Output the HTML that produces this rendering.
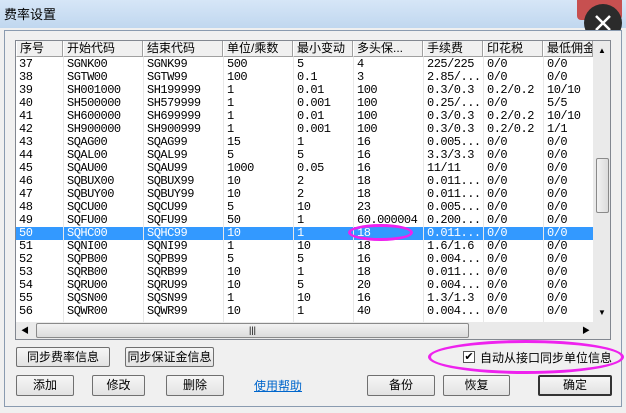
<!DOCTYPE html>
<html><head><meta charset="utf-8"><style>
*{margin:0;padding:0;box-sizing:border-box}
body{width:626px;height:413px;overflow:hidden;background:#f0f0f0;font-family:"Liberation Sans","Noto Sans CJK SC",sans-serif;font-size:12px;color:#000;position:relative}
.abs{position:absolute}
.title{left:0;top:0;width:626px;height:28px;background:linear-gradient(#d6e6f7,#c0d7ef);}
.title span{position:absolute;left:4px;top:4px;font-size:13px}
.panel{left:4px;top:30px;width:618px;height:377px;border:1px solid #8a9bb0;background:#f0f0f0}
.grid{left:15px;top:40px;width:596px;height:300px;border:1px solid #828790;background:#fff;overflow:hidden}
.hdr{position:absolute;top:0;height:16px;background:#f0f0f0;border-right:1px solid #a0a0a0;border-bottom:1px solid #a0a0a0;border-left:1px solid #fff;padding-left:3px;line-height:15px;white-space:nowrap;overflow:hidden}
.row{position:absolute;left:0;width:577px;height:13px;line-height:13px;font-family:"Liberation Mono","Noto Sans CJK SC",monospace;font-size:12px;letter-spacing:-0.5px}
.row span{position:absolute;top:0;white-space:nowrap}
.vl{position:absolute;top:16px;height:265px;width:1px;background:#e8e8e8}
.sel{background:#3399ff;color:#fff}
.btn{position:absolute;background:linear-gradient(#f6f6f6,#e2e2e2);border:1px solid #707070;border-radius:2px;text-align:center;font-size:12px;white-space:nowrap;overflow:hidden}
</style></head><body>
<div class="abs title"><span>费率设置</span></div>
<div class="abs" style="left:577px;top:0;width:45px;height:20px;background:#c75050;border-radius:0 0 4px 4px"></div>
<div class="abs" style="left:584px;top:4px;width:38px;height:38px;border-radius:50%;background:#2b2b2b"></div>
<svg class="abs" style="left:584px;top:4px" width="38" height="38"><path d="M12 12L26 26M26 12L12 26" stroke="#fff" stroke-width="2.5"/></svg>
<div class="abs panel"></div>
<div class="abs grid">
<div class="hdr" style="left:0;width:47px">序号</div>
<div class="hdr" style="left:47px;width:80px">开始代码</div>
<div class="hdr" style="left:127px;width:80px">结束代码</div>
<div class="hdr" style="left:207px;width:70px">单位/乘数</div>
<div class="hdr" style="left:277px;width:60px">最小变动</div>
<div class="hdr" style="left:337px;width:70px">多头保...</div>
<div class="hdr" style="left:407px;width:60px">手续费</div>
<div class="hdr" style="left:467px;width:60px">印花税</div>
<div class="hdr" style="left:527px;width:50px">最低佣金</div>
<div id="rows"></div>
<div class="vl" style="left:47px"></div><div class="vl" style="left:127px"></div><div class="vl" style="left:207px"></div><div class="vl" style="left:277px"></div><div class="vl" style="left:337px"></div><div class="vl" style="left:407px"></div><div class="vl" style="left:467px"></div><div class="vl" style="left:527px"></div>
<div class="abs" style="left:577px;top:0;width:17px;height:298px;background:#eaeaea"></div>
<div class="abs" style="left:582px;top:5px;font-size:8px">▲</div>
<div class="abs" style="left:582px;top:267px;font-size:8px">▼</div>
<div class="abs" style="left:580px;top:117px;width:13px;height:55px;border:1px solid #8a8a8a;border-radius:2px;background:linear-gradient(90deg,#f2f2f2,#dcdcdc)"></div>
<div class="abs" style="left:0;top:281px;width:577px;height:17px;background:#eaeaea"></div>
<div class="abs" style="left:5px;top:284px;font-size:8px">◀</div>
<div class="abs" style="left:566px;top:284px;font-size:8px">▶</div>
<div class="abs" style="left:20px;top:282px;width:433px;height:15px;border:1px solid #8a8a8a;border-radius:2px;background:linear-gradient(#f2f2f2,#dcdcdc);text-align:center;font-size:9px;line-height:13px">|||</div>
</div>
<div class="abs" style="left:348px;top:224px;width:65px;height:17px;border:3px solid #ee22ee;border-radius:50%"></div>
<div class="btn" style="left:16px;top:347px;width:94px;height:20px;line-height:18px">同步费率信息</div>
<div class="btn" style="left:125px;top:347px;width:89px;height:20px;line-height:18px">同步保证金信息</div>
<div class="btn" style="left:16px;top:375px;width:58px;height:21px;line-height:19px">添加</div>
<div class="btn" style="left:92px;top:375px;width:53px;height:21px;line-height:19px">修改</div>
<div class="btn" style="left:166px;top:375px;width:58px;height:21px;line-height:19px">删除</div>
<div class="abs" style="left:254px;top:377px;font-size:12px;color:#0066cc;text-decoration:underline">使用帮助</div>
<div class="btn" style="left:367px;top:375px;width:68px;height:21px;line-height:19px">备份</div>
<div class="btn" style="left:443px;top:375px;width:67px;height:21px;line-height:19px">恢复</div>
<div class="btn" style="left:538px;top:375px;width:74px;height:21px;line-height:17px;border:2px solid #333">确定</div>
<div class="abs" style="left:463px;top:351px;width:12px;height:12px;border:1px solid #555;background:#fff;font-size:11px;line-height:10px;text-align:center">✔</div>
<div class="abs" style="left:480px;top:349px;font-size:12px;white-space:nowrap">自动从接口同步单位信息</div>
<div class="abs" style="left:428px;top:340px;width:196px;height:34px;border:3px solid #ee22ee;border-radius:50%"></div>
<script>
var d=[["37","SGNK00","SGNK99","500","5","4","225/225","0/0","0/0"],["38","SGTW00","SGTW99","100","0.1","3","2.85/...","0/0","0/0"],["39","SH001000","SH199999","1","0.01","100","0.3/0.3","0.2/0.2","10/10"],["40","SH500000","SH579999","1","0.001","100","0.25/...","0/0","5/5"],["41","SH600000","SH699999","1","0.01","100","0.3/0.3","0.2/0.2","10/10"],["42","SH900000","SH900999","1","0.001","100","0.3/0.3","0.2/0.2","1/1"],["43","SQAG00","SQAG99","15","1","16","0.005...","0/0","0/0"],["44","SQAL00","SQAL99","5","5","16","3.3/3.3","0/0","0/0"],["45","SQAU00","SQAU99","1000","0.05","16","11/11","0/0","0/0"],["46","SQBUX00","SQBUX99","10","2","18","0.011...","0/0","0/0"],["47","SQBUY00","SQBUY99","10","2","18","0.011...","0/0","0/0"],["48","SQCU00","SQCU99","5","10","23","0.005...","0/0","0/0"],["49","SQFU00","SQFU99","50","1","60.000004","0.200...","0/0","0/0"],["50","SQHC00","SQHC99","10","1","18","0.011...","0/0","0/0"],["51","SQNI00","SQNI99","1","10","18","1.6/1.6","0/0","0/0"],["52","SQPB00","SQPB99","5","5","16","0.004...","0/0","0/0"],["53","SQRB00","SQRB99","10","1","18","0.011...","0/0","0/0"],["54","SQRU00","SQRU99","10","5","20","0.004...","0/0","0/0"],["55","SQSN00","SQSN99","1","10","16","1.3/1.3","0/0","0/0"],["56","SQWR00","SQWR99","10","1","40","0.004...","0/0","0/0"]];
var x=[3,51,131,211,281,341,411,471,531],h="";
d.forEach(function(r,i){h+='<div class="row'+(r[0]=="50"?' sel':'')+'" style="top:'+(17+i*13)+'px">';r.forEach(function(c,j){h+='<span style="left:'+x[j]+'px">'+c+'</span>'});h+='</div>'});
document.getElementById('rows').innerHTML=h;
</script>
</body></html>
